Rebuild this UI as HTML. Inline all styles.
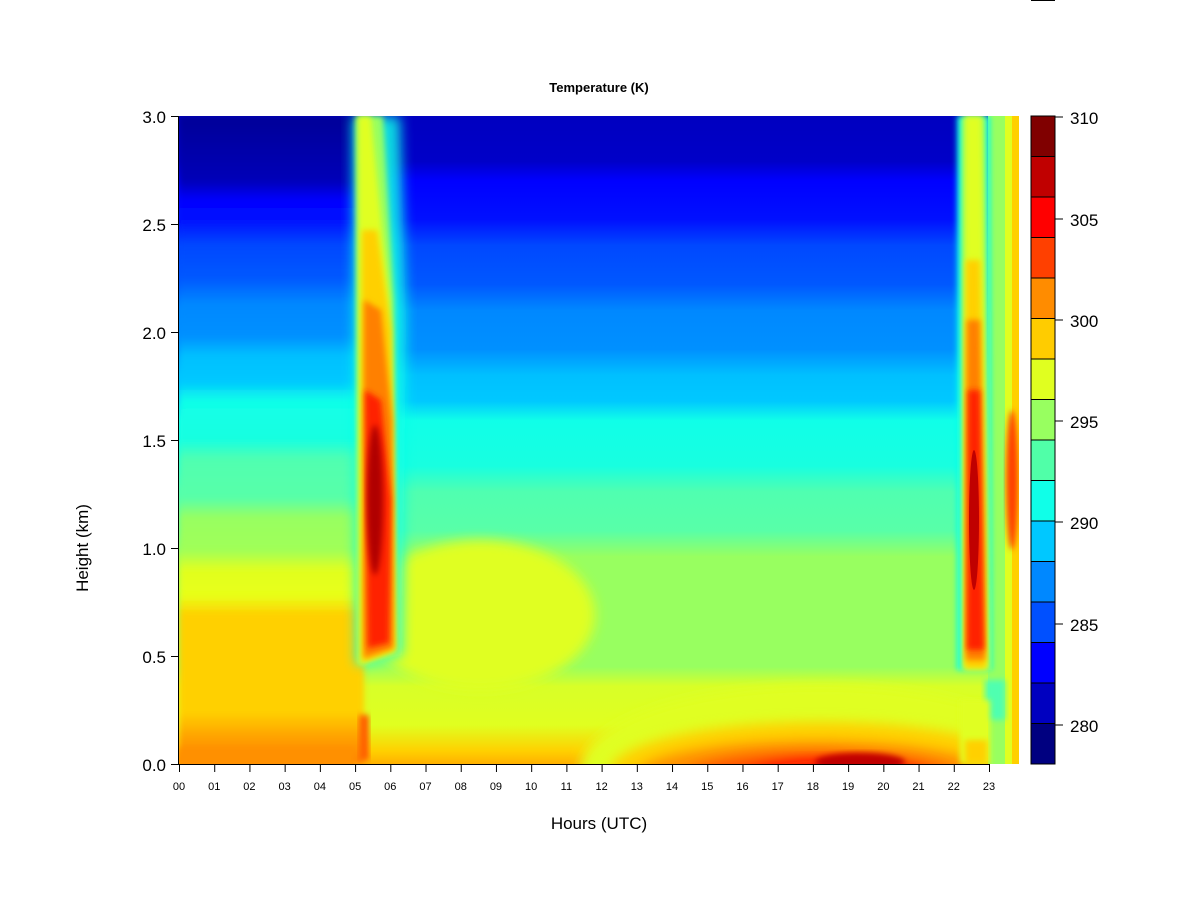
<!DOCTYPE html>
<html><head><style>
body{margin:0;background:#fff;width:1200px;height:900px;overflow:hidden;font-family:"Liberation Sans",Arial,sans-serif;}
svg text{font-family:"Liberation Sans",Arial,sans-serif;}
</style></head><body>
<svg width="1200" height="900" viewBox="0 0 1200 900" xmlns="http://www.w3.org/2000/svg">
<defs>
<linearGradient id="gMid" x1="0" y1="116" x2="0" y2="764" gradientUnits="userSpaceOnUse">
<stop offset="0" stop-color="#0000C0"/><stop offset="0.07" stop-color="#0000C8"/>
<stop offset="0.1" stop-color="#0000FF"/><stop offset="0.16" stop-color="#0010FF"/>
<stop offset="0.2" stop-color="#0048FF"/><stop offset="0.26" stop-color="#0058FF"/>
<stop offset="0.3" stop-color="#0088FF"/><stop offset="0.36" stop-color="#0090FF"/>
<stop offset="0.4" stop-color="#00C0FF"/><stop offset="0.44" stop-color="#00C8FF"/>
<stop offset="0.47" stop-color="#10FFE8"/><stop offset="0.54" stop-color="#18FFE0"/>
<stop offset="0.58" stop-color="#50FFB0"/><stop offset="0.64" stop-color="#58FFA8"/>
<stop offset="0.68" stop-color="#98FF60"/><stop offset="0.85" stop-color="#98FF60"/>
<stop offset="0.88" stop-color="#D8FF28"/><stop offset="0.94" stop-color="#E0FF20"/>
<stop offset="0.98" stop-color="#FFD000"/><stop offset="1" stop-color="#FFB000"/>
</linearGradient>
<linearGradient id="gLeft" x1="0" y1="116" x2="0" y2="764" gradientUnits="userSpaceOnUse">
<stop offset="0" stop-color="#000098"/><stop offset="0.1" stop-color="#0000B8"/>
<stop offset="0.13" stop-color="#0000FF"/><stop offset="0.16" stop-color="#0010FF"/>
<stop offset="0.2" stop-color="#0048FF"/><stop offset="0.25" stop-color="#0058FF"/>
<stop offset="0.29" stop-color="#0088FF"/><stop offset="0.34" stop-color="#0090FF"/>
<stop offset="0.37" stop-color="#00C0FF"/><stop offset="0.41" stop-color="#00C8FF"/>
<stop offset="0.44" stop-color="#10FFE8"/><stop offset="0.5" stop-color="#18FFE0"/>
<stop offset="0.53" stop-color="#50FFB0"/><stop offset="0.59" stop-color="#58FFA8"/>
<stop offset="0.62" stop-color="#98FF60"/><stop offset="0.67" stop-color="#A0FF58"/>
<stop offset="0.7" stop-color="#E0FF20"/><stop offset="0.74" stop-color="#E8FF18"/>
<stop offset="0.77" stop-color="#FFD000"/><stop offset="0.92" stop-color="#FFD000"/>
<stop offset="0.96" stop-color="#FFA000"/><stop offset="1" stop-color="#FF8000"/>
</linearGradient>
<filter id="b" x="-20%" y="-20%" width="140%" height="140%"><feGaussianBlur stdDeviation="6"/></filter>
<filter id="b2" x="-20%" y="-20%" width="140%" height="140%"><feGaussianBlur stdDeviation="3"/></filter>
<clipPath id="cp"><rect x="179" y="116" width="840" height="648"/></clipPath>
</defs>
<text x="599" y="92" font-size="13" font-weight="bold" text-anchor="middle">Temperature (K)</text>
<g clip-path="url(#cp)">
<rect x="179" y="116" width="840" height="648" fill="url(#gMid)"/>
<rect x="179" y="116" width="185" height="648" fill="url(#gLeft)" filter="url(#b2)"/>
<!-- middle yellow patch 06-11 -->
<ellipse cx="480" cy="615" rx="115" ry="75" fill="#E0FF20" filter="url(#b)"/>
<!-- bottom hot region -->
<ellipse cx="820" cy="770" rx="240" ry="85" fill="#E0FF20" filter="url(#b)"/>
<ellipse cx="820" cy="772" rx="210" ry="50" fill="#FFD000" filter="url(#b)"/>
<ellipse cx="815" cy="777" rx="180" ry="36" fill="#FF9000" filter="url(#b)"/>
<ellipse cx="820" cy="780" rx="140" ry="27" fill="#FF5000" filter="url(#b)"/>
<ellipse cx="835" cy="782" rx="95" ry="22" fill="#FF1000" filter="url(#b)"/>
<ellipse cx="860" cy="762" rx="45" ry="9" fill="#C00000" filter="url(#b2)"/>
<rect x="179" y="748" width="175" height="20" fill="#FF9000" filter="url(#b2)"/>
<!-- first plume -->
<polygon points="352,116 372,116 400,116 406,320 402,655 356,665" fill="#10FFE8" filter="url(#b)" opacity="0.85"/>
<polygon points="356,116 383,116 394,300 397,655 358,665" fill="#98FF60" filter="url(#b2)"/>
<polygon points="358,116 371,116 389,300 395,650 360,665" fill="#E0FF20" filter="url(#b2)"/>
<polygon points="362,230 377,230 391,330 395,650 362,662" fill="#FFD000" filter="url(#b2)"/>
<polygon points="364,300 381,310 392,420 393,648 364,658" fill="#FF8000" filter="url(#b2)"/>
<polygon points="365,390 381,400 391,500 389,643 368,648" fill="#FF2000" filter="url(#b2)"/>
<ellipse cx="375" cy="500" rx="8" ry="75" fill="#B00000" filter="url(#b2)"/>
<rect x="359" y="715" width="10" height="45" fill="#FF6000" filter="url(#b2)"/>
<!-- second plume 22h -->
<rect x="988" y="116" width="31" height="648" fill="#98FF60"/>
<rect x="1005" y="116" width="14" height="648" fill="#E0FF20"/>
<rect x="1012" y="116" width="7" height="648" fill="#FFD000"/>
<ellipse cx="1012" cy="480" rx="6" ry="70" fill="#FF4000" filter="url(#b2)"/>
<polygon points="957,116 990,116 992,670 957,670" fill="#10FFE8" filter="url(#b2)"/>
<polygon points="962,116 985,116 990,670 962,670" fill="#98FF60" filter="url(#b2)"/>
<polygon points="965,116 982,116 988,670 964,670" fill="#E0FF20" filter="url(#b2)"/>
<polygon points="966,260 980,260 986,668 965,668" fill="#FFD000" filter="url(#b2)"/>
<polygon points="967,320 980,320 985,660 966,660" fill="#FF8000" filter="url(#b2)"/>
<polygon points="968,390 980,390 984,650 967,650" fill="#FF2000" filter="url(#b2)"/>
<ellipse cx="974" cy="520" rx="5" ry="70" fill="#C00000"/>
<rect x="985" y="680" width="20" height="40" fill="#50FFB0" filter="url(#b2)"/>
<rect x="960" y="700" width="30" height="64" fill="#E0FF20" filter="url(#b2)"/>
<rect x="965" y="740" width="22" height="24" fill="#FFD000" filter="url(#b2)"/>
</g>
<!-- axes -->
<g stroke="#000" stroke-width="1" fill="none">
<line x1="179" y1="764.5" x2="989" y2="764.5"/>
<line x1="178.5" y1="116" x2="178.5" y2="764"/>
</g>
<g stroke="#000">
<line x1="171" y1="116.5" x2="179" y2="116.5"/><line x1="171" y1="224.5" x2="179" y2="224.5"/>
<line x1="171" y1="332.5" x2="179" y2="332.5"/><line x1="171" y1="440.5" x2="179" y2="440.5"/>
<line x1="171" y1="548.5" x2="179" y2="548.5"/><line x1="171" y1="656.5" x2="179" y2="656.5"/>
<line x1="171" y1="764.5" x2="179" y2="764.5"/>
</g>
<g font-size="17" text-anchor="end">
<text x="166" y="123">3.0</text><text x="166" y="231">2.5</text><text x="166" y="339">2.0</text>
<text x="166" y="447">1.5</text><text x="166" y="555">1.0</text><text x="166" y="663">0.5</text>
<text x="166" y="771">0.0</text>
</g>
<g id="xt" stroke="#000"></g>
<g font-size="11" text-anchor="middle" id="xl"></g>
<text x="599" y="829" font-size="17" text-anchor="middle">Hours (UTC)</text>
<text transform="translate(88,548) rotate(-90)" font-size="17" text-anchor="middle">Height (km)</text>
<!-- colorbar -->
<g stroke="#000" stroke-width="1">
<rect x="1031" y="116" width="24" height="40.5" fill="#800000"/>
<rect x="1031" y="156.5" width="24" height="40.5" fill="#C00000"/>
<rect x="1031" y="197" width="24" height="40.5" fill="#FF0000"/>
<rect x="1031" y="237.5" width="24" height="40.5" fill="#FF4000"/>
<rect x="1031" y="278" width="24" height="40.5" fill="#FF8C00"/>
<rect x="1031" y="318.5" width="24" height="40.5" fill="#FFCC00"/>
<rect x="1031" y="359" width="24" height="40.5" fill="#E0FF20"/>
<rect x="1031" y="399.5" width="24" height="40.5" fill="#98FF60"/>
<rect x="1031" y="440" width="24" height="40.5" fill="#50FFA8"/>
<rect x="1031" y="480.5" width="24" height="40.5" fill="#10FFE8"/>
<rect x="1031" y="521" width="24" height="40.5" fill="#00C8FF"/>
<rect x="1031" y="561.5" width="24" height="40.5" fill="#0088FF"/>
<rect x="1031" y="602" width="24" height="40.5" fill="#0050FF"/>
<rect x="1031" y="642.5" width="24" height="40.5" fill="#0000FF"/>
<rect x="1031" y="683" width="24" height="40.5" fill="#0000C0"/>
<rect x="1031" y="723.5" width="24" height="40.5" fill="#000080"/>
<line x1="1055" y1="117" x2="1063" y2="117"/><line x1="1055" y1="219" x2="1063" y2="219"/>
<line x1="1055" y1="320" x2="1063" y2="320"/><line x1="1055" y1="421" x2="1063" y2="421"/>
<line x1="1055" y1="522" x2="1063" y2="522"/><line x1="1055" y1="624" x2="1063" y2="624"/>
<line x1="1055" y1="725" x2="1063" y2="725"/>
<line x1="1031" y1="0.5" x2="1055" y2="0.5"/>
</g>
<g font-size="17">
<text x="1070" y="124">310</text><text x="1070" y="226">305</text><text x="1070" y="327">300</text>
<text x="1070" y="428">295</text><text x="1070" y="529">290</text><text x="1070" y="631">285</text>
<text x="1070" y="732">280</text>
</g>
</svg>
<script>
var ns="http://www.w3.org/2000/svg",t=document.getElementById('xt'),l=document.getElementById('xl');
for(var i=0;i<24;i++){var x=179+i*35.217;var ln=document.createElementNS(ns,'line');ln.setAttribute('x1',x+0.5);ln.setAttribute('x2',x+0.5);ln.setAttribute('y1',764);ln.setAttribute('y2',772);t.appendChild(ln);
var tx=document.createElementNS(ns,'text');tx.setAttribute('x',x);tx.setAttribute('y',790);tx.textContent=(i<10?'0':'')+i;l.appendChild(tx);}
</script>
</body></html>
